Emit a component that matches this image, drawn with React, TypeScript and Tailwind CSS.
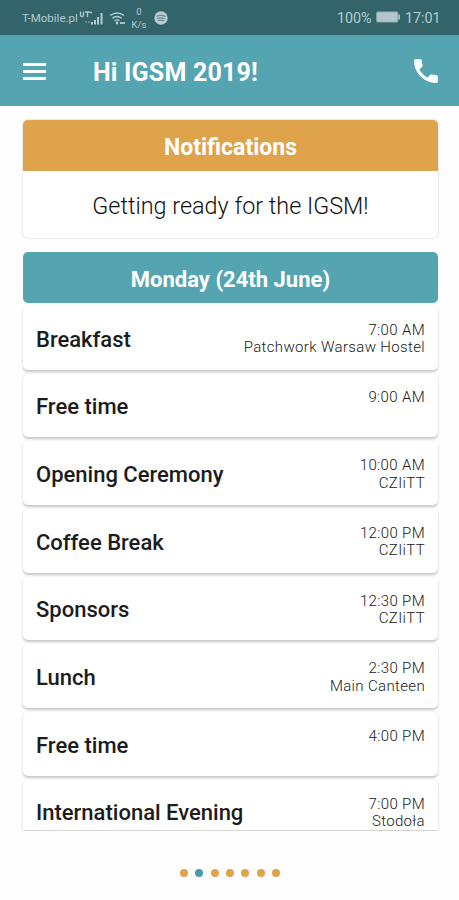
import React from "react";

type Event = { title: string; time: string; place?: string };

const events: Event[] = [
  { title: "Breakfast", time: "7:00 AM", place: "Patchwork Warsaw Hostel" },
  { title: "Free time", time: "9:00 AM" },
  { title: "Opening Ceremony", time: "10:00 AM", place: "CZIiTT" },
  { title: "Coffee Break", time: "12:00 PM", place: "CZIiTT" },
  { title: "Sponsors", time: "12:30 PM", place: "CZIiTT" },
  { title: "Lunch", time: "2:30 PM", place: "Main Canteen" },
  { title: "Free time", time: "4:00 PM" },
  { title: "International Evening", time: "7:00 PM", place: "Stodoła" },
];

function StatusBar() {
  return (
    <div className="flex h-[35px] items-center bg-[#336469] pl-[22px] pr-[19px] text-[#b0cdd1]">
      <span className="w-[56px] whitespace-nowrap pt-[2px] text-[11.5px] leading-none">T-Mobile.pl</span>
      <svg className="h-[16px] w-[26px]" viewBox="0 0 26 16" fill="currentColor">
        <path d="M2.500 1.500v3.500q0 1.500 1.500 1.500T5.500 5V1.500M7 2h5M9.500 2v5M12 2.500h2" fill="none" stroke="currentColor" strokeWidth="1.3" />
        <path d="M7 11h2v2H7zM10 11h2v2h-2z" opacity=".35" />
        <path d="M13 12h2v2.500h-2zM16 10h2v4.500h-2zM19 7h2v7.500h-2zM22.500 3h2v11.500h-2z" />
      </svg>
      <svg className="ml-[5px] h-[16px] w-[17px]" viewBox="0 0 17 16" fill="none" stroke="currentColor" strokeWidth="1.4">
        <path d="M1 5.500Q8 .5 15 5.500M3.300 8.300Q8 4.700 12.700 8.300M5.500 10.800Q8 9 10.500 10.800" />
        <circle cx="8" cy="13" r=".7" fill="currentColor" />
        <path d="M11 13h5" strokeWidth="1.8" />
      </svg>
      <div className="ml-[5px] flex w-[16px] flex-col items-center pt-[1px] text-[9.500px] leading-[13.500px]">
        <span>0</span>
        <span>K/s</span>
      </div>
      <svg className="ml-[7px] h-[14px] w-[14px]" viewBox="0 0 14 14">
        <circle cx="7" cy="7" r="6.700" fill="#bccbcf" />
        <path d="M3 5q4.300-1.400 8.200.5M3.500 7.300q3.700-1.100 7 .4M4 9.500q3-.8 5.700.3" fill="none" stroke="#668b91" strokeWidth="1.200" strokeLinecap="round" />
      </svg>
      <div className="ml-auto flex items-center text-[14.300px] leading-none">
        <span className="w-[35px] whitespace-nowrap pt-[2px]">100%</span>
        <svg className="ml-[4px] h-[12px] w-[25px]" viewBox="0 0 25 12">
          <rect x=".7" y="1" width="21" height="10" rx="1" fill="#b5c5ce" stroke="#8daeb3" />
          <path d="M22 3.500h2v5h-2z" fill="#9ab9be" />
        </svg>
        <span className="ml-[4px] w-[35px] whitespace-nowrap pt-[2px]">17:01</span>
      </div>
    </div>
  );
}

function Header() {
  return (
    <header className="flex h-[71px] items-center bg-[#54a5b1] pl-[23px] pr-[21px] text-white">
      <div className="flex w-[23px] flex-col gap-[4px] pt-px">
        <span className="h-[3px] bg-white" />
        <span className="h-[3px] bg-white" />
        <span className="h-[3px] bg-white" />
      </div>
      <h1 className="ml-[47px] whitespace-nowrap pt-[3px] text-[25px] font-bold leading-none tracking-[0.200px]">Hi IGSM 2019!</h1>
      <svg className="ml-auto h-[24px] w-[24px]" viewBox="2.700 2.700 18.600 18.600" fill="currentColor" stroke="currentColor" strokeWidth=".6">
        <path d="M6.620 10.790c1.440 2.830 3.760 5.140 6.590 6.590l2.200-2.200c.27-.27.67-.36 1.020-.24 1.120.37 2.330.57 3.570.57.55 0 1 .45 1 1V20c0 .55-.45 1-1 1-9.390 0-17-7.610-17-17 0-.55.45-1 1-1h3.500c.55 0 1 .45 1 1 0 1.250.2 2.450.57 3.570.11.35.03.74-.25 1.020l-2.200 2.200z" />
      </svg>
    </header>
  );
}

function EventCard({ title, time, place }: Event) {
  return (
    <li className="mb-[4px] flex h-[63.700px] shrink-0 items-start justify-between rounded-[5px] bg-white pl-[13px] pr-[13px] shadow-[0_1.5px_2.5px_rgba(0,0,0,0.22)]">
      <span className="mt-[19.500px] whitespace-nowrap text-[22px] font-medium leading-[28px] text-[#1c1c1c]">{title}</span>
      <div className="mt-[15.800px] whitespace-nowrap text-right text-[15px] font-light leading-[17.500px] tracking-[0.350px] text-[#202020]">
        <div>{time}</div>
        <div>{place}</div>
      </div>
    </li>
  );
}

export default function App() {
  return (
    <div className="flex h-[900px] w-[459px] flex-col overflow-hidden bg-[#fefefe] font-[Roboto,sans-serif]">
      <StatusBar />
      <Header />
      <main className="flex flex-col pt-[14px]">
        <section className="mx-[23px] h-[118px] w-[415px] overflow-hidden rounded-[5px] bg-white shadow-[0_0_2px_rgba(0,0,0,0.28)]">
          <h2 className="flex h-[51px] items-center justify-center bg-[#dfa34b] pt-[5px] text-[23px] font-bold text-white">Notifications</h2>
          <p className="flex h-[67px] items-center justify-center pt-[4px] text-[23.400px] font-light text-[#111]">Getting ready for the IGSM!</p>
        </section>
        <h2 className="mx-[23px] mt-[14px] flex h-[51px] w-[415px] items-center justify-center rounded-[5px] bg-[#54a5b1] pt-[3px] text-[22px] font-bold text-white">Monday (24th June)</h2>
        <ul className="mx-[20px] flex h-[527px] w-[421px] flex-col overflow-hidden px-[3px] pt-[3px]">
          {events.map((event) => (
            <EventCard key={event.time} {...event} />
          ))}
        </ul>
        <div className="mx-[23px] h-px w-[415px] bg-[#d5d5d5]" />
        <div className="ml-px mt-[38px] flex justify-center gap-[7.400px]">
          {[0, 1, 2, 3, 4, 5, 6].map((page) => (
            <span key={page} className={page === 1 ? "h-[8px] w-[8px] rounded-full bg-[#459dab]" : "h-[8px] w-[8px] rounded-full bg-[#dfa34b]"} />
          ))}
        </div>
      </main>
    </div>
  );
}
